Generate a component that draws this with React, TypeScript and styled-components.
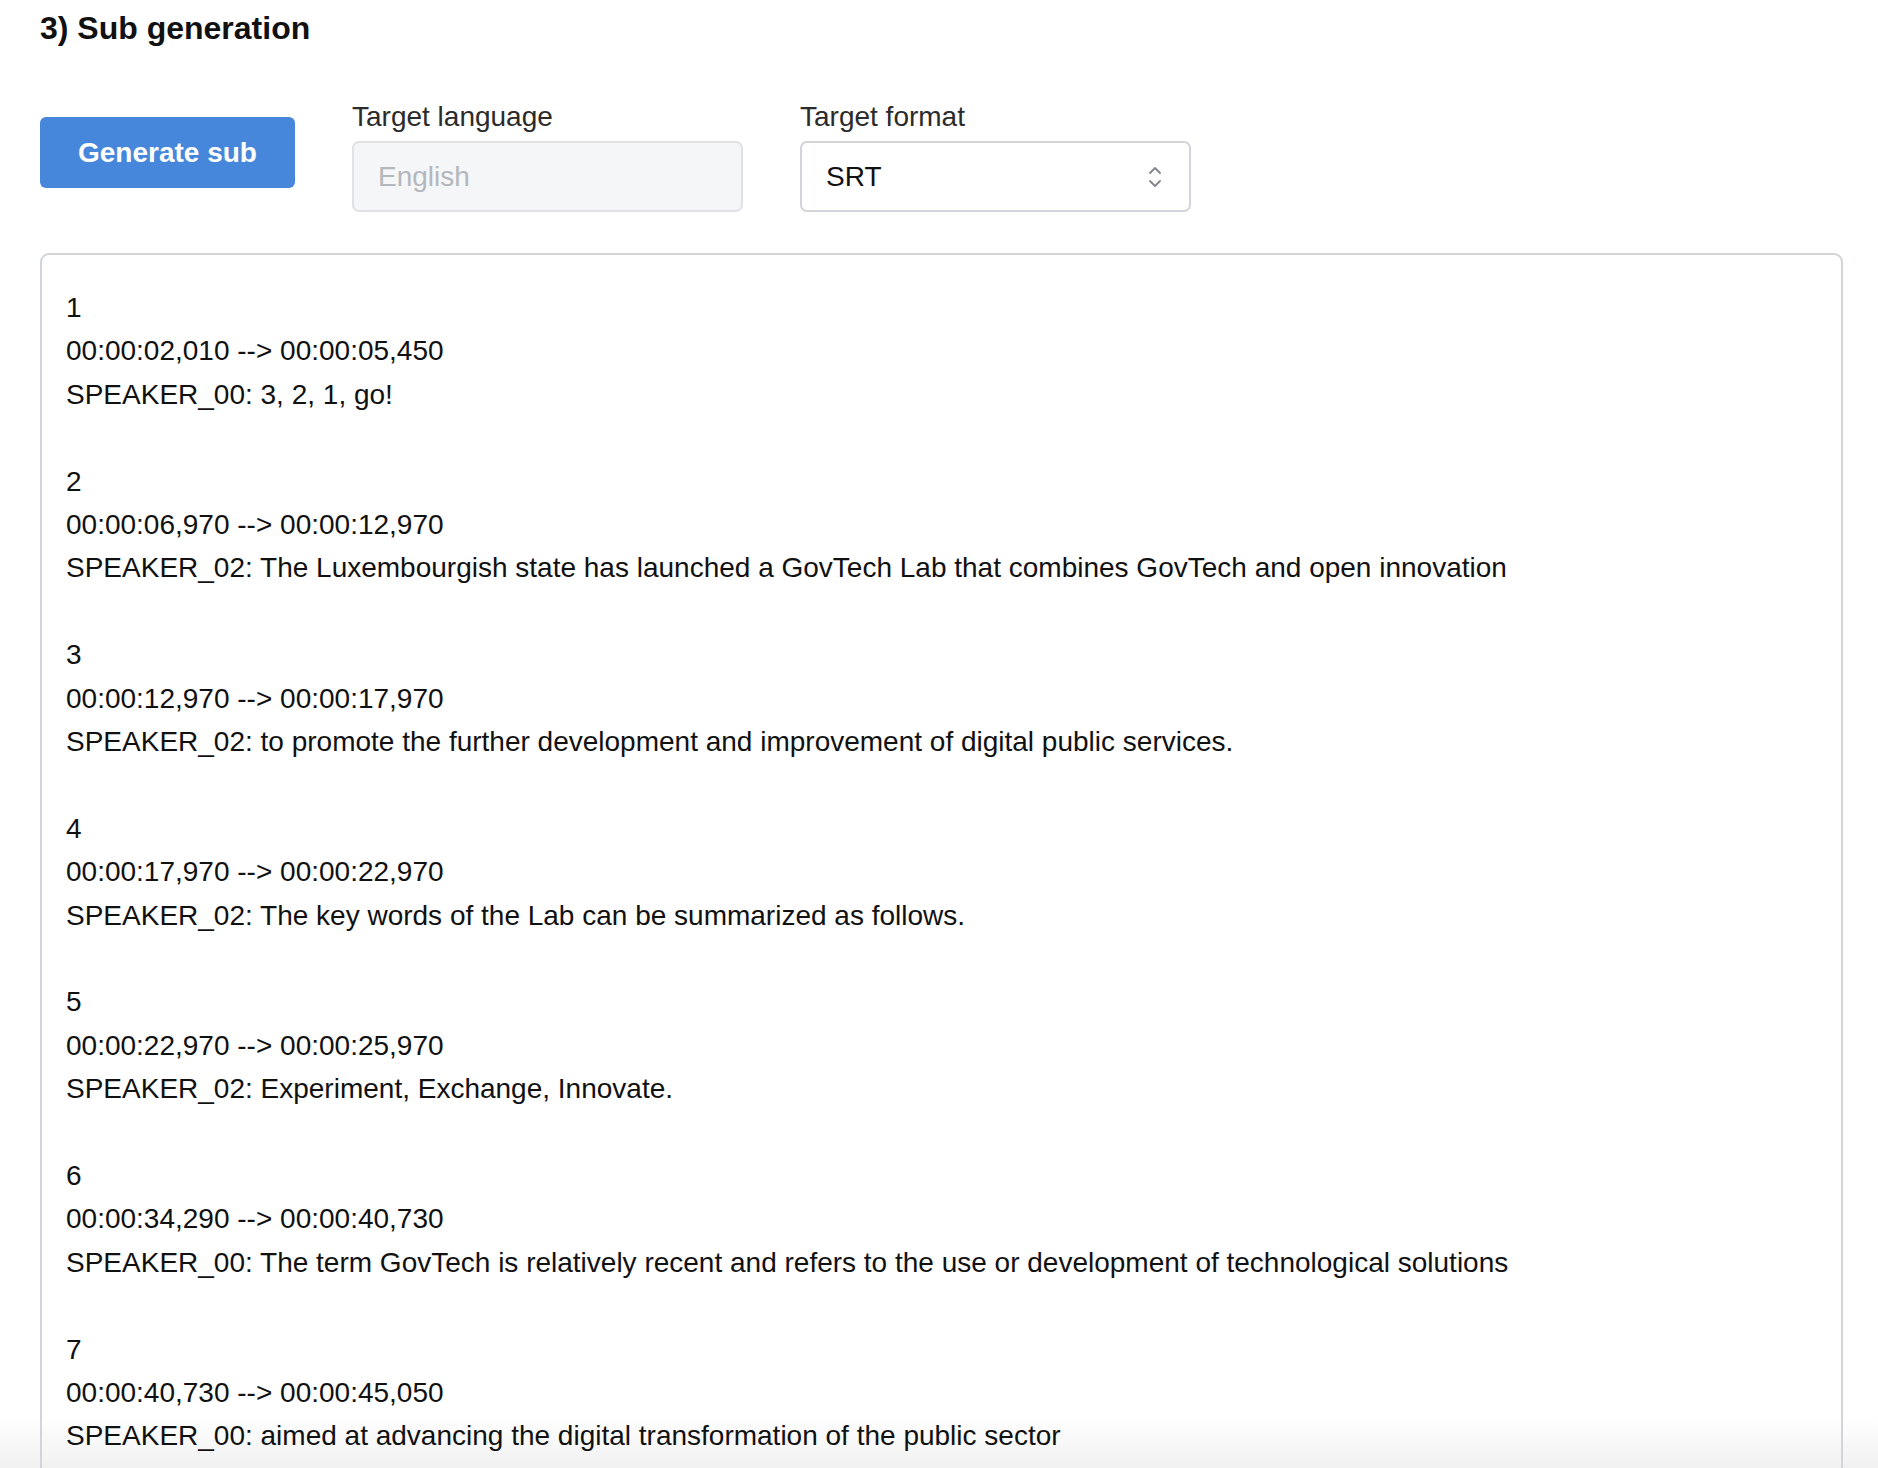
import styled, { createGlobalStyle } from 'styled-components';

const GlobalStyle = createGlobalStyle`
  body {
    margin: 0;
    background: #ffffff;
    font-family: 'Liberation Sans', Arial, Helvetica, sans-serif;
    color: #111111;
  }
`;

type Cue = {
  index: number;
  start: string;
  end: string;
  text: string;
};

const cues: Cue[] = [
  { index: 1, start: '00:00:02,010', end: '00:00:05,450', text: 'SPEAKER_00: 3, 2, 1, go!' },
  {
    index: 2,
    start: '00:00:06,970',
    end: '00:00:12,970',
    text: 'SPEAKER_02: The Luxembourgish state has launched a GovTech Lab that combines GovTech and open innovation',
  },
  {
    index: 3,
    start: '00:00:12,970',
    end: '00:00:17,970',
    text: 'SPEAKER_02: to promote the further development and improvement of digital public services.',
  },
  {
    index: 4,
    start: '00:00:17,970',
    end: '00:00:22,970',
    text: 'SPEAKER_02: The key words of the Lab can be summarized as follows.',
  },
  { index: 5, start: '00:00:22,970', end: '00:00:25,970', text: 'SPEAKER_02: Experiment, Exchange, Innovate.' },
  {
    index: 6,
    start: '00:00:34,290',
    end: '00:00:40,730',
    text: 'SPEAKER_00: The term GovTech is relatively recent and refers to the use or development of technological solutions',
  },
  {
    index: 7,
    start: '00:00:40,730',
    end: '00:00:45,050',
    text: 'SPEAKER_00: aimed at advancing the digital transformation of the public sector',
  },
];

export default function App() {
  return (
    <>
      <GlobalStyle />
      <Page>
        <Title>3) Sub generation</Title>
        <Controls>
          <GenerateButton type="button">Generate sub</GenerateButton>
          <Field>
            <Label>Target language</Label>
            <Input disabled placeholder="English" />
          </Field>
          <Field>
            <Label>Target format</Label>
            <SelectBox>
              <span>SRT</span>
              <svg width="16" height="26" viewBox="0 0 16 26" fill="none">
                <path d="M3 9L8 4L13 9" stroke="#80858c" strokeWidth="1.8" strokeLinecap="round" strokeLinejoin="round" />
                <path d="M3 17L8 22L13 17" stroke="#80858c" strokeWidth="1.8" strokeLinecap="round" strokeLinejoin="round" />
              </svg>
            </SelectBox>
          </Field>
        </Controls>
        <Output>
          {cues.map((cue) => (
            <CueBlock key={cue.index}>
              <Line>{cue.index}</Line>
              <Line>
                {cue.start} --&gt; {cue.end}
              </Line>
              <Line>{cue.text}</Line>
            </CueBlock>
          ))}
        </Output>
      </Page>
    </>
  );
}

const Page = styled.div`
  padding: 8px 35px 0 40px;
  height: 1468px;
  overflow: hidden;
  box-sizing: border-box;
  background: linear-gradient(to bottom, #ffffff calc(100% - 52px), #f1f1f1 100%);
`;

const Title = styled.h3`
  margin: 0;
  font-size: 32px;
  line-height: 40px;
  font-weight: bold;
  color: #111111;
`;

const Controls = styled.div`
  display: flex;
  align-items: flex-start;
  gap: 57px;
  margin-top: 53px;
`;

const GenerateButton = styled.button`
  margin-top: 16px;
  width: 255px;
  height: 71px;
  border: none;
  border-radius: 6px;
  background: #4787db;
  color: #ffffff;
  font-family: 'Liberation Sans', Arial, sans-serif;
  font-size: 28px;
  font-weight: bold;
  cursor: pointer;
`;

const Field = styled.div`
  display: flex;
  flex-direction: column;
  gap: 8px;
  width: 391px;
`;

const Label = styled.label`
  font-size: 28px;
  line-height: 32px;
  color: #2b2b2b;
`;

const Input = styled.input`
  box-sizing: border-box;
  width: 100%;
  height: 71px;
  padding: 0 24px;
  border: 2px solid #dfe2e6;
  border-radius: 7px;
  background: #f5f6f8;
  font-family: 'Liberation Sans', Arial, sans-serif;
  font-size: 28px;
  color: #b4b7bc;
  &::placeholder {
    color: #b4b7bc;
  }
`;

const SelectBox = styled.div`
  box-sizing: border-box;
  width: 100%;
  height: 71px;
  padding: 0 26px 0 24px;
  border: 2px solid #d1d5da;
  border-radius: 7px;
  background: #ffffff;
  display: flex;
  align-items: center;
  justify-content: space-between;
  font-size: 28px;
  color: #111111;
`;

const Output = styled.div`
  margin-top: 41px;
  border: 2px solid #d1d5da;
  border-radius: 9px;
  padding: 31px 24px 0;
  display: flex;
  flex-direction: column;
  gap: 43.4px;
  min-height: 1400px;
  box-sizing: border-box;
  background: transparent;
`;

const CueBlock = styled.div`
  display: flex;
  flex-direction: column;
`;

const Line = styled.div`
  font-size: 28px;
  line-height: 43.4px;
  color: #111111;
  white-space: pre-wrap;
`;
